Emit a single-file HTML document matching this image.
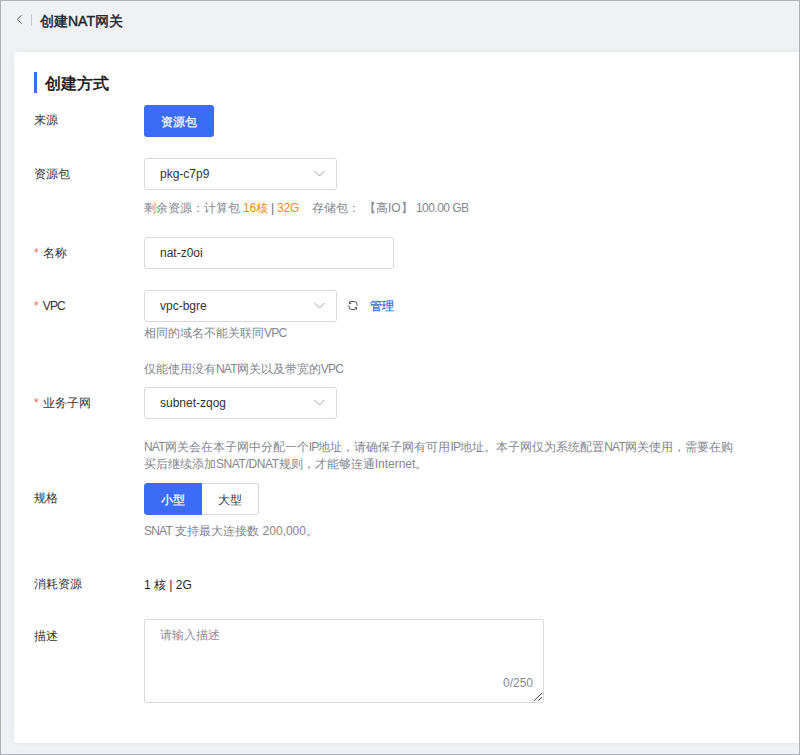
<!DOCTYPE html>
<html><head><meta charset="utf-8">
<style>
*{box-sizing:border-box;margin:0;padding:0}
html,body{width:800px;height:755px;overflow:hidden;background:#eff1f5;font-family:"Liberation Sans",sans-serif;font-size:12px;color:#333}
.frame{position:absolute;left:0;top:0;width:800px;height:755px;border:1px solid #adb0b4;z-index:5}
.abs{position:absolute;white-space:nowrap}
.card{position:absolute;left:14px;top:52px;width:792px;height:691px;background:#fff;border-radius:3px;box-shadow:0 0 3px rgba(0,0,0,0.04),0 0 10px rgba(0,10,40,0.04)}
.title{left:40px;top:13px;font-size:14px;font-weight:normal;-webkit-text-stroke:0.45px #1f2430;color:#1f2430;line-height:16px}
.bar{left:34px;top:72px;width:3px;height:21px;background:#3c6cf6}
.sec{left:45px;top:75px;font-size:16px;font-weight:normal;-webkit-text-stroke:0.5px #111;color:#111;line-height:18px}
.lbl{left:34px;font-size:12px;color:#333;line-height:14px}
.req{color:#f4664a;margin-right:4px}
.btn{left:144px;top:105px;width:70px;height:32px;background:#3c6cf6;border-radius:3px;color:#fff;text-align:center;line-height:32px;padding-top:1px;padding-right:1px;-webkit-text-stroke:0.25px #fff}
.sel{left:144px;width:193px;height:32px;border:1px solid #d9d9d9;border-radius:3px;background:#fff;padding-left:15px;line-height:30px;color:#333}
.chev{position:absolute;left:169px;top:11px}
.help{left:144px;color:#82868e;line-height:14px}
.orange{color:#f98b20}
.c{letter-spacing:-0.8px}
.link{color:#2b63f0;-webkit-text-stroke:0.2px #2b63f0}
.seg{top:483px;height:32px;line-height:32px;text-align:center;border:1px solid #d9d9d9;background:#fff}
.ta{left:144px;top:619px;width:400px;height:84px;border:1px solid #d9d9d9;border-radius:2px}
</style></head><body>
<div class="frame"></div>
<!-- header -->
<svg class="abs" style="left:15px;top:14px" width="10" height="12" viewBox="0 0 10 12"><path d="M6.6 1.1 L2.4 5.4 L6.6 9.7" fill="none" stroke="#4a5068" stroke-width="0.9"/></svg>
<div class="abs" style="left:31px;top:14px;width:1px;height:12px;background:#c8c8c8"></div>
<div class="abs title">创建NAT网关</div>

<div class="card"></div>
<div class="abs bar"></div>
<div class="abs sec">创建方式</div>

<div class="abs lbl" style="top:113px">来源</div>
<div class="abs btn">资源包</div>

<div class="abs lbl" style="top:167px">资源包</div>
<div class="abs sel" style="top:158px">pkg-c7p9<svg class="chev" width="12" height="8" viewBox="0 0 12 8"><path d="M0.5 1 L5.5 6 L10.5 1" fill="none" stroke="#a0a0a0" stroke-width="1"/></svg></div>
<div class="abs help" style="top:201px">剩余资源：计算包</div>
<div class="abs help" style="left:243px;top:201px;letter-spacing:-0.2px"><span class="orange">16核</span> <span style="color:#6b6f78">|</span> <span class="orange">32G</span></div>
<div class="abs help" style="left:312px;top:201px">存储包：</div>
<div class="abs help" style="left:364px;top:201px">【高IO】</div>
<div class="abs help" style="left:416px;top:201px;letter-spacing:-0.55px">100.00 GB</div>

<div class="abs lbl" style="top:246px"><span class="req">*</span>名称</div>
<div class="abs sel" style="top:237px;width:250px">nat-z0oi</div>

<div class="abs lbl" style="top:299px"><span class="req">*</span><span class="c">VPC</span></div>
<div class="abs sel" style="top:290px">vpc-bgre<svg class="chev" width="12" height="8" viewBox="0 0 12 8"><path d="M0.5 1 L5.5 6 L10.5 1" fill="none" stroke="#a0a0a0" stroke-width="1"/></svg></div>
<svg class="abs" style="left:348px;top:300px" width="10" height="11" viewBox="0 0 10 11"><path d="M2.6 1.5 H6.2 Q9 1.5 9 4.2 V5.8 M7.4 9.5 H3.8 Q1 9.5 1 6.8 V5.2" fill="none" stroke="#444" stroke-width="0.9"/><path d="M1 1 L1 3.8 L3.8 3.8 Z M9 10 L9 7.2 L6.2 7.2 Z" fill="#444"/></svg>
<div class="abs link" style="left:370px;top:298px">管理</div>
<div class="abs help" style="top:326px">相同的域名不能关联同<span class="c">VPC</span></div>
<div class="abs help" style="top:362px">仅能使用没有<span class="c">NAT</span>网关以及带宽的<span class="c">VPC</span></div>

<div class="abs lbl" style="top:396px"><span class="req">*</span>业务子网</div>
<div class="abs sel" style="top:387px">subnet-zqog<svg class="chev" width="12" height="8" viewBox="0 0 12 8"><path d="M0.5 1 L5.5 6 L10.5 1" fill="none" stroke="#a0a0a0" stroke-width="1"/></svg></div>
<div class="abs help" style="top:439px;line-height:17px"><span class="c">NAT</span>网关会在本子网中分配一个<span class="c">IP</span>地址，请确保子网有可用<span class="c">IP</span>地址。本子网仅为系统配置<span class="c">NAT</span>网关使用，需要在购<br>买后继续添加<span style="letter-spacing:-0.4px">SNAT/DNAT</span>规则，才能够连通Internet。</div>

<div class="abs lbl" style="top:491px">规格</div>
<div class="abs seg" style="left:144px;width:58px;background:#3c6cf6;border-color:#3c6cf6;color:#fff;-webkit-text-stroke:0.25px #fff;border-radius:3px 0 0 3px">小型</div>
<div class="abs seg" style="left:202px;width:57px;border-left:none;border-radius:0 3px 3px 0;color:#333">大型</div>
<div class="abs help" style="top:524px"><span class="c">SNAT</span> 支持最大连接数 200,000。</div>

<div class="abs lbl" style="top:577px">消耗资源</div>
<div class="abs" style="left:144px;top:577px;color:#1f1f1f">1 核 | 2G</div>

<div class="abs lbl" style="top:629px">描述</div>
<div class="abs ta"></div>
<div class="abs" style="left:160px;top:627px;color:#8c9099">请输入描述</div>
<div class="abs" style="left:503px;top:676px;color:#848996">0/250</div>
<svg class="abs" style="left:533px;top:691px" width="10" height="10" viewBox="0 0 10 10"><path d="M1.2 9.6 L9.1 2 M5.3 9.6 L9.1 6.1" fill="none" stroke="#444" stroke-width="1"/></svg>
</body></html>
